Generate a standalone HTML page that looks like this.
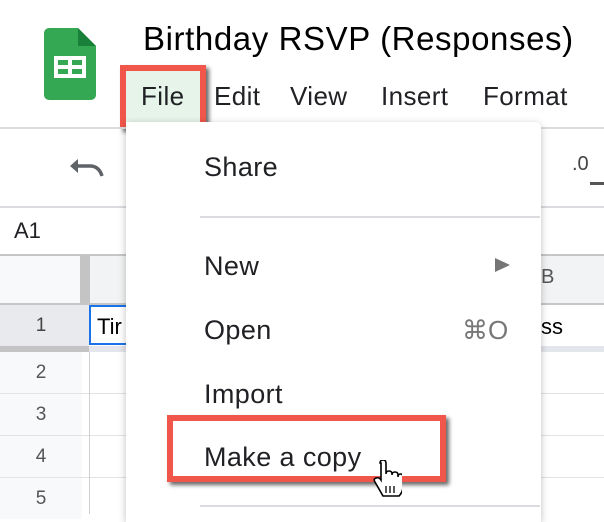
<!DOCTYPE html>
<html><head><style>
body{margin:0;width:604px;height:514px;overflow:hidden;background:#fff;font-family:"Liberation Sans",Arial,sans-serif;position:relative;color:#202124}
.a{position:absolute;white-space:nowrap}
.hl{position:absolute;height:2px;background:#dadce0}
.rn{position:absolute;left:0;width:82px;text-align:center;font-size:19px;color:#555;background:#f8f9fa}
.mi{position:absolute;left:204px;font-size:27px;letter-spacing:.4px;color:#202124}
.mb{position:absolute;top:81px;font-size:26px;letter-spacing:.4px}
</style></head><body>
<svg class="a" style="left:44px;top:28px" width="52" height="72" viewBox="0 0 52 72">
<path d="M5 0H34L52 18V67a5 5 0 0 1-5 5H5a5 5 0 0 1-5-5V5a5 5 0 0 1 5-5z" fill="#34a853"/>
<path d="M34 0V18H52z" fill="#188038"/>
<rect x="10" y="28" width="32" height="22" fill="#fff"/>
<rect x="14" y="32" width="10" height="5" fill="#34a853"/><rect x="28" y="32" width="10" height="5" fill="#34a853"/>
<rect x="14" y="41" width="10" height="5" fill="#34a853"/><rect x="28" y="41" width="10" height="5" fill="#34a853"/>
</svg>
<div class="a" style="left:143px;top:20px;font-size:33px;letter-spacing:.6px;color:#000">Birthday RSVP (Responses)</div>
<div class="a" style="left:126px;top:71px;width:74px;height:52px;background:#e6f4ea"></div>
<div class="mb" style="left:141px">File</div>
<div class="mb" style="left:214px">Edit</div>
<div class="mb" style="left:290px">View</div>
<div class="mb" style="left:381px">Insert</div>
<div class="mb" style="left:483px">Format</div>
<div class="a" style="left:120px;top:65px;width:74px;height:52px;border:6px solid #f0564a;box-shadow:3px 3px 4px rgba(0,0,0,.6)"></div>

<div class="hl" style="left:0;top:127px;width:604px"></div>
<svg class="a" style="left:68px;top:158px" width="36" height="22" viewBox="0 0 36 22"><path d="M6 8H22q9 0 12 10" fill="none" stroke="#5f6368" stroke-width="3.5"/><path d="M2 8L10 1V15z" fill="#5f6368"/></svg>
<div class="a" style="left:572px;top:153px;font-size:20px;color:#444">.0</div>
<div class="a" style="left:590px;top:182px;width:14px;height:3px;background:#555"></div>
<div class="hl" style="left:0;top:206px;width:604px"></div>
<div class="a" style="left:14px;top:218px;font-size:22px">A1</div>
<div class="hl" style="left:0;top:254px;width:604px;background:#c4c7c5"></div>
<div class="a" style="left:0;top:256px;width:604px;height:48px;background:#f8f9fa"></div>
<div class="a" style="left:80px;top:256px;width:10px;height:48px;background:#c4c4c4"></div>
<div class="a" style="left:90px;top:256px;width:514px;height:48px;background:#f1f3f4"></div>
<div class="a" style="left:541px;top:266px;font-size:20px;color:#555">B</div>
<div class="hl" style="left:0;top:303px;width:604px;background:#c4c7c5"></div>
<div class="a" style="left:0;top:305px;width:89px;height:42px;background:#e8eaed"></div>
<div class="a" style="left:0;top:315px;width:82px;text-align:center;font-size:19px;color:#444">1</div>
<div class="a" style="left:0;top:346px;width:89px;height:6px;background:#c4c4c4"></div>
<div class="a" style="left:89px;top:346px;width:515px;height:6px;background:#e3e6ec"></div>
<div class="a" style="left:89px;top:305px;width:40px;height:36px;border:2px solid #1a73e8;border-right:none"></div>
<div class="a" style="left:97px;top:314px;font-size:22px;color:#000">Tir</div>
<div class="a" style="left:541px;top:314px;font-size:22px;color:#000">ss</div>
<div class="rn" style="top:352px;height:41px;line-height:41px">2</div>
<div class="rn" style="top:394px;height:41px;line-height:41px">3</div>
<div class="rn" style="top:436px;height:41px;line-height:41px">4</div>
<div class="rn" style="top:478px;height:41px;line-height:41px">5</div>
<div class="a" style="left:0;top:393px;width:604px;height:1px;background:#e2e3e3"></div>
<div class="a" style="left:0;top:435px;width:604px;height:1px;background:#e2e3e3"></div>
<div class="a" style="left:0;top:477px;width:604px;height:1px;background:#e2e3e3"></div>
<div class="a" style="left:89px;top:352px;width:1px;height:162px;background:#d0d0d0"></div>

<div class="a" style="left:126px;top:122px;width:415px;height:400px;background:#fff;border-radius:0 6px 0 0;box-shadow:0 2px 8px rgba(0,0,0,.25)"></div>
<div class="mi" style="top:152px">Share</div>
<div class="a" style="left:200px;top:216px;width:340px;height:2px;background:#dadce0"></div>
<div class="mi" style="top:251px">New</div>
<svg class="a" style="left:495px;top:258px" width="15" height="14"><path d="M0 0L15 7L0 14z" fill="#757575"/></svg>
<div class="mi" style="top:315px">Open</div>
<div class="a" style="left:462px;top:315px;font-size:26px;color:#777">⌘O</div>
<div class="mi" style="top:379px">Import</div>
<div class="mi" style="top:442px">Make a copy</div>
<div class="a" style="left:200px;top:505px;width:340px;height:2px;background:#dadce0"></div>
<div class="a" style="left:167px;top:415px;width:267px;height:55px;border:6px solid #f0564a;box-shadow:3px 3px 4px rgba(0,0,0,.6)"></div>
<svg class="a" style="left:372px;top:460px" width="30" height="38" viewBox="0 0 30 38"><path d="M8 3q0-3 3-3t3 3v11q0-3 3-3t3 3v1q0-3 3-3t3 3v2q0-3 2.5-3t2.5 3v9q0 6-4 10H11L3 22q-2-3 1-4t5 2V3z" fill="#fff" stroke="#000" stroke-width="1.6"/><path d="M14 26v7M18 26v7M22 26v7" stroke="#000" stroke-width="1.3"/></svg>
</body></html>
